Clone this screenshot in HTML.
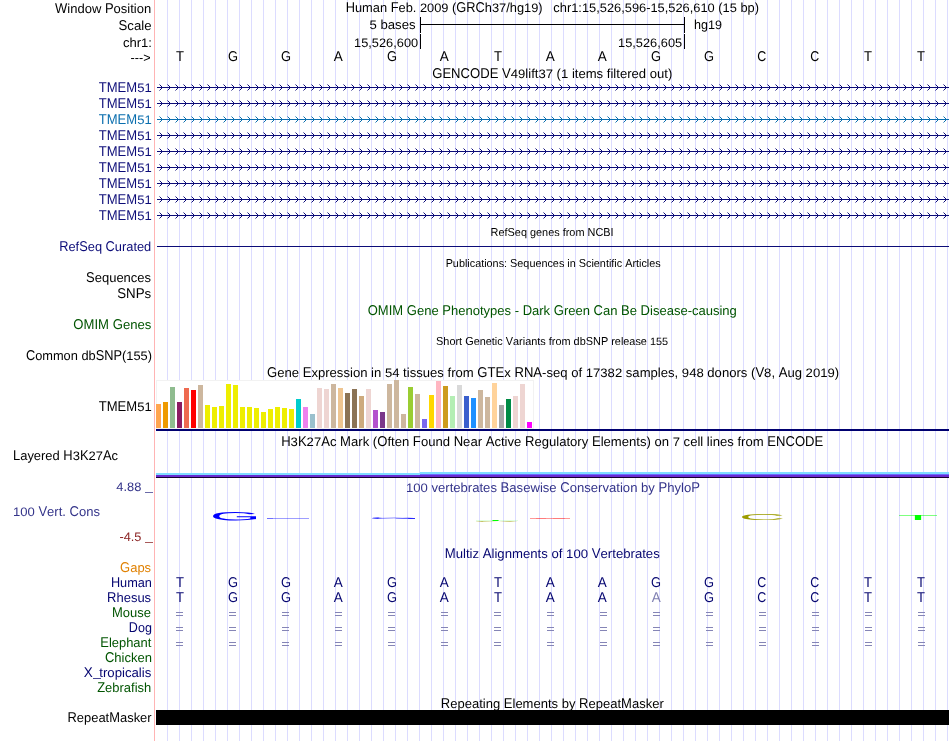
<!DOCTYPE html>
<html><head><meta charset="utf-8"><title>UCSC Genome Browser</title>
<style>
html,body{margin:0;padding:0;background:#fff;}
body{width:950px;height:741px;position:relative;overflow:hidden;font-family:"Liberation Sans",sans-serif;}
.t{position:absolute;white-space:pre;font-size:13px;line-height:16px;color:#000;text-rendering:geometricPrecision;}
.t u,.t b{display:inline-block;text-decoration:none;font-weight:normal;transform-origin:0 12px;}
.t u{transform:scaleY(1.09);}
.t b{transform:scaleY(0.95);}
.s{font-size:11px;line-height:14px;}
.s u,.s b{transform-origin:0 11px;}
.s u{transform:scaleY(1.055);}
.s b{transform:scaleY(0.95);}
#tx{position:absolute;left:0;top:0;width:950px;height:741px;will-change:transform;}
.b{position:absolute;display:block;}
</style></head><body>
<div id="tx">
<div class="b" style="left:167px;top:0px;width:1px;height:741px;background:#dcdcff"></div>
<div class="b" style="left:179px;top:0px;width:1px;height:741px;background:#dcdcff"></div>
<div class="b" style="left:191px;top:0px;width:1px;height:741px;background:#dcdcff"></div>
<div class="b" style="left:203px;top:0px;width:1px;height:741px;background:#dcdcff"></div>
<div class="b" style="left:215px;top:0px;width:1px;height:741px;background:#dcdcff"></div>
<div class="b" style="left:227px;top:0px;width:1px;height:741px;background:#dcdcff"></div>
<div class="b" style="left:239px;top:0px;width:1px;height:741px;background:#dcdcff"></div>
<div class="b" style="left:251px;top:0px;width:1px;height:741px;background:#dcdcff"></div>
<div class="b" style="left:263px;top:0px;width:1px;height:741px;background:#dcdcff"></div>
<div class="b" style="left:275px;top:0px;width:1px;height:741px;background:#dcdcff"></div>
<div class="b" style="left:287px;top:0px;width:1px;height:741px;background:#dcdcff"></div>
<div class="b" style="left:299px;top:0px;width:1px;height:741px;background:#dcdcff"></div>
<div class="b" style="left:311px;top:0px;width:1px;height:741px;background:#dcdcff"></div>
<div class="b" style="left:323px;top:0px;width:1px;height:741px;background:#dcdcff"></div>
<div class="b" style="left:335px;top:0px;width:1px;height:741px;background:#dcdcff"></div>
<div class="b" style="left:347px;top:0px;width:1px;height:741px;background:#dcdcff"></div>
<div class="b" style="left:359px;top:0px;width:1px;height:741px;background:#dcdcff"></div>
<div class="b" style="left:371px;top:0px;width:1px;height:741px;background:#dcdcff"></div>
<div class="b" style="left:383px;top:0px;width:1px;height:741px;background:#dcdcff"></div>
<div class="b" style="left:395px;top:0px;width:1px;height:741px;background:#dcdcff"></div>
<div class="b" style="left:407px;top:0px;width:1px;height:741px;background:#dcdcff"></div>
<div class="b" style="left:419px;top:0px;width:1px;height:741px;background:#dcdcff"></div>
<div class="b" style="left:431px;top:0px;width:1px;height:741px;background:#dcdcff"></div>
<div class="b" style="left:443px;top:0px;width:1px;height:741px;background:#dcdcff"></div>
<div class="b" style="left:455px;top:0px;width:1px;height:741px;background:#dcdcff"></div>
<div class="b" style="left:467px;top:0px;width:1px;height:741px;background:#dcdcff"></div>
<div class="b" style="left:479px;top:0px;width:1px;height:741px;background:#dcdcff"></div>
<div class="b" style="left:491px;top:0px;width:1px;height:741px;background:#dcdcff"></div>
<div class="b" style="left:503px;top:0px;width:1px;height:741px;background:#dcdcff"></div>
<div class="b" style="left:515px;top:0px;width:1px;height:741px;background:#dcdcff"></div>
<div class="b" style="left:527px;top:0px;width:1px;height:741px;background:#dcdcff"></div>
<div class="b" style="left:539px;top:0px;width:1px;height:741px;background:#dcdcff"></div>
<div class="b" style="left:551px;top:0px;width:1px;height:741px;background:#dcdcff"></div>
<div class="b" style="left:563px;top:0px;width:1px;height:741px;background:#dcdcff"></div>
<div class="b" style="left:575px;top:0px;width:1px;height:741px;background:#dcdcff"></div>
<div class="b" style="left:587px;top:0px;width:1px;height:741px;background:#dcdcff"></div>
<div class="b" style="left:599px;top:0px;width:1px;height:741px;background:#dcdcff"></div>
<div class="b" style="left:611px;top:0px;width:1px;height:741px;background:#dcdcff"></div>
<div class="b" style="left:623px;top:0px;width:1px;height:741px;background:#dcdcff"></div>
<div class="b" style="left:635px;top:0px;width:1px;height:741px;background:#dcdcff"></div>
<div class="b" style="left:647px;top:0px;width:1px;height:741px;background:#dcdcff"></div>
<div class="b" style="left:659px;top:0px;width:1px;height:741px;background:#dcdcff"></div>
<div class="b" style="left:671px;top:0px;width:1px;height:741px;background:#dcdcff"></div>
<div class="b" style="left:683px;top:0px;width:1px;height:741px;background:#dcdcff"></div>
<div class="b" style="left:695px;top:0px;width:1px;height:741px;background:#dcdcff"></div>
<div class="b" style="left:707px;top:0px;width:1px;height:741px;background:#dcdcff"></div>
<div class="b" style="left:719px;top:0px;width:1px;height:741px;background:#dcdcff"></div>
<div class="b" style="left:731px;top:0px;width:1px;height:741px;background:#dcdcff"></div>
<div class="b" style="left:743px;top:0px;width:1px;height:741px;background:#dcdcff"></div>
<div class="b" style="left:755px;top:0px;width:1px;height:741px;background:#dcdcff"></div>
<div class="b" style="left:767px;top:0px;width:1px;height:741px;background:#dcdcff"></div>
<div class="b" style="left:779px;top:0px;width:1px;height:741px;background:#dcdcff"></div>
<div class="b" style="left:791px;top:0px;width:1px;height:741px;background:#dcdcff"></div>
<div class="b" style="left:803px;top:0px;width:1px;height:741px;background:#dcdcff"></div>
<div class="b" style="left:815px;top:0px;width:1px;height:741px;background:#dcdcff"></div>
<div class="b" style="left:827px;top:0px;width:1px;height:741px;background:#dcdcff"></div>
<div class="b" style="left:839px;top:0px;width:1px;height:741px;background:#dcdcff"></div>
<div class="b" style="left:851px;top:0px;width:1px;height:741px;background:#dcdcff"></div>
<div class="b" style="left:863px;top:0px;width:1px;height:741px;background:#dcdcff"></div>
<div class="b" style="left:875px;top:0px;width:1px;height:741px;background:#dcdcff"></div>
<div class="b" style="left:887px;top:0px;width:1px;height:741px;background:#dcdcff"></div>
<div class="b" style="left:899px;top:0px;width:1px;height:741px;background:#dcdcff"></div>
<div class="b" style="left:911px;top:0px;width:1px;height:741px;background:#dcdcff"></div>
<div class="b" style="left:923px;top:0px;width:1px;height:741px;background:#dcdcff"></div>
<div class="b" style="left:935px;top:0px;width:1px;height:741px;background:#dcdcff"></div>
<div class="b" style="left:947px;top:0px;width:1px;height:741px;background:#dcdcff"></div>
<div class="b" style="left:154px;top:0px;width:1px;height:741px;background:#ffb4b4"></div>
<div class="t" style="left:55.4px;top:1px;width:96.10px;transform:scaleX(0.9990);transform-origin:100% 0"><u>W</u>indow <u>P</u>osition</div>
<div class="t" style="left:118.98px;top:18px;width:32.52px;transform:scaleX(1.0148);transform-origin:100% 0"><u>S</u>cale</div>
<div class="t" style="left:122.6px;top:35px;width:28.90px;transform:scaleX(1.0034);transform-origin:100% 0">chr<b>1</b>:</div>
<div class="t" style="left:130.42px;top:50px;width:20.58px;transform:scaleX(0.9719);transform-origin:100% 0">---&gt;</div>
<div class="t" style="left:343.48px;top:0px;width:418.44px;transform:scaleX(0.9870);transform-origin:50% 0"><u>H</u>uman <u>F</u>eb. <b>2009</b> (<u>GRC</u>h<b>37</b>/hg<b>19</b>)   chr<b>1</b>:<b>15</b>,<b>526</b>,<b>596</b>-<b>15</b>,<b>526</b>,<b>610</b> (<b>15</b> bp)</div>
<div class="t" style="left:370.47px;top:17px;width:45.53px;transform:scaleX(1.0103);transform-origin:100% 0"><b>5</b> bases</div>
<div class="b" style="left:420px;top:17px;width:1px;height:16px;background:#000"></div>
<div class="b" style="left:684px;top:17px;width:1px;height:16px;background:#000"></div>
<div class="b" style="left:420px;top:24px;width:265px;height:1px;background:#000"></div>
<div class="t" style="left:694px;top:17px;width:28.92px;transform:scaleX(0.9682);transform-origin:0 0">hg<b>19</b></div>
<div class="t" style="left:352.94px;top:35px;width:65.06px;transform:scaleX(0.9837);transform-origin:100% 0"><b>15</b>,<b>526</b>,<b>600</b></div>
<div class="b" style="left:420px;top:34px;width:1px;height:15px;background:#000"></div>
<div class="t" style="left:616.94px;top:35px;width:65.06px;transform:scaleX(0.9837);transform-origin:100% 0"><b>15</b>,<b>526</b>,<b>605</b></div>
<div class="b" style="left:684px;top:34px;width:1px;height:15px;background:#000"></div>
<div class="t" style="left:176.03px;top:49px;width:7.94px;transform:scaleX(1.0074);transform-origin:50% 0"><u>T</u></div>
<div class="t" style="left:227.87px;top:49px;width:10.11px;transform:scaleX(0.9889);transform-origin:50% 0"><u>G</u></div>
<div class="t" style="left:280.8px;top:49px;width:10.11px;transform:scaleX(0.9889);transform-origin:50% 0"><u>G</u></div>
<div class="t" style="left:334.45px;top:49px;width:8.67px;transform:scaleX(1.0380);transform-origin:50% 0"><u>A</u></div>
<div class="t" style="left:386.66px;top:49px;width:10.11px;transform:scaleX(0.9889);transform-origin:50% 0"><u>G</u></div>
<div class="t" style="left:440.31px;top:49px;width:8.67px;transform:scaleX(1.0380);transform-origin:50% 0"><u>A</u></div>
<div class="t" style="left:493.61px;top:49px;width:7.94px;transform:scaleX(1.0074);transform-origin:50% 0"><u>T</u></div>
<div class="t" style="left:546.17px;top:49px;width:8.67px;transform:scaleX(1.0380);transform-origin:50% 0"><u>A</u></div>
<div class="t" style="left:598.3px;top:49px;width:8.67px;transform:scaleX(1.0380);transform-origin:50% 0"><u>A</u></div>
<div class="t" style="left:651.31px;top:49px;width:10.11px;transform:scaleX(0.9889);transform-origin:50% 0"><u>G</u></div>
<div class="t" style="left:704.24px;top:49px;width:10.11px;transform:scaleX(0.9889);transform-origin:50% 0"><u>G</u></div>
<div class="t" style="left:756.54px;top:49px;width:9.39px;transform:scaleX(0.9587);transform-origin:50% 0"><u>C</u></div>
<div class="t" style="left:810.17px;top:49px;width:9.39px;transform:scaleX(0.9587);transform-origin:50% 0"><u>C</u></div>
<div class="t" style="left:864.12px;top:49px;width:7.94px;transform:scaleX(1.0074);transform-origin:50% 0"><u>T</u></div>
<div class="t" style="left:917.05px;top:49px;width:7.94px;transform:scaleX(1.0074);transform-origin:50% 0"><u>T</u></div>
<div class="t" style="left:432.79px;top:66px;width:238.42px;transform:scaleX(1.0066);transform-origin:50% 0"><u>GENCODE</u> <u>V</u><b>49</b>lift<b>37</b> (<b>1</b> items filtered out)</div>
<div class="t" style="left:98.77px;top:80px;width:52.73px;color:#0c0c78;transform:scaleX(1.0051);transform-origin:100% 0"><u>TMEM</u><b>51</b></div>
<svg class="b" style="left:157px;top:84px" width="792" height="7" viewBox="0 0 792 7"><path d="M0 3.5H792" stroke="#0c0c78" stroke-width="1" fill="none"/><path d="M2.5 0.5L5.5 3.5L2.5 6.5M10.5 0.5L13.5 3.5L10.5 6.5M18.5 0.5L21.5 3.5L18.5 6.5M26.5 0.5L29.5 3.5L26.5 6.5M34.5 0.5L37.5 3.5L34.5 6.5M42.5 0.5L45.5 3.5L42.5 6.5M50.5 0.5L53.5 3.5L50.5 6.5M58.5 0.5L61.5 3.5L58.5 6.5M66.5 0.5L69.5 3.5L66.5 6.5M74.5 0.5L77.5 3.5L74.5 6.5M82.5 0.5L85.5 3.5L82.5 6.5M90.5 0.5L93.5 3.5L90.5 6.5M98.5 0.5L101.5 3.5L98.5 6.5M106.5 0.5L109.5 3.5L106.5 6.5M114.5 0.5L117.5 3.5L114.5 6.5M122.5 0.5L125.5 3.5L122.5 6.5M130.5 0.5L133.5 3.5L130.5 6.5M138.5 0.5L141.5 3.5L138.5 6.5M146.5 0.5L149.5 3.5L146.5 6.5M154.5 0.5L157.5 3.5L154.5 6.5M162.5 0.5L165.5 3.5L162.5 6.5M170.5 0.5L173.5 3.5L170.5 6.5M178.5 0.5L181.5 3.5L178.5 6.5M186.5 0.5L189.5 3.5L186.5 6.5M194.5 0.5L197.5 3.5L194.5 6.5M202.5 0.5L205.5 3.5L202.5 6.5M210.5 0.5L213.5 3.5L210.5 6.5M218.5 0.5L221.5 3.5L218.5 6.5M226.5 0.5L229.5 3.5L226.5 6.5M234.5 0.5L237.5 3.5L234.5 6.5M242.5 0.5L245.5 3.5L242.5 6.5M250.5 0.5L253.5 3.5L250.5 6.5M258.5 0.5L261.5 3.5L258.5 6.5M266.5 0.5L269.5 3.5L266.5 6.5M274.5 0.5L277.5 3.5L274.5 6.5M282.5 0.5L285.5 3.5L282.5 6.5M290.5 0.5L293.5 3.5L290.5 6.5M298.5 0.5L301.5 3.5L298.5 6.5M306.5 0.5L309.5 3.5L306.5 6.5M314.5 0.5L317.5 3.5L314.5 6.5M322.5 0.5L325.5 3.5L322.5 6.5M330.5 0.5L333.5 3.5L330.5 6.5M338.5 0.5L341.5 3.5L338.5 6.5M346.5 0.5L349.5 3.5L346.5 6.5M354.5 0.5L357.5 3.5L354.5 6.5M362.5 0.5L365.5 3.5L362.5 6.5M370.5 0.5L373.5 3.5L370.5 6.5M378.5 0.5L381.5 3.5L378.5 6.5M386.5 0.5L389.5 3.5L386.5 6.5M394.5 0.5L397.5 3.5L394.5 6.5M402.5 0.5L405.5 3.5L402.5 6.5M410.5 0.5L413.5 3.5L410.5 6.5M418.5 0.5L421.5 3.5L418.5 6.5M426.5 0.5L429.5 3.5L426.5 6.5M434.5 0.5L437.5 3.5L434.5 6.5M442.5 0.5L445.5 3.5L442.5 6.5M450.5 0.5L453.5 3.5L450.5 6.5M458.5 0.5L461.5 3.5L458.5 6.5M466.5 0.5L469.5 3.5L466.5 6.5M474.5 0.5L477.5 3.5L474.5 6.5M482.5 0.5L485.5 3.5L482.5 6.5M490.5 0.5L493.5 3.5L490.5 6.5M498.5 0.5L501.5 3.5L498.5 6.5M506.5 0.5L509.5 3.5L506.5 6.5M514.5 0.5L517.5 3.5L514.5 6.5M522.5 0.5L525.5 3.5L522.5 6.5M530.5 0.5L533.5 3.5L530.5 6.5M538.5 0.5L541.5 3.5L538.5 6.5M546.5 0.5L549.5 3.5L546.5 6.5M554.5 0.5L557.5 3.5L554.5 6.5M562.5 0.5L565.5 3.5L562.5 6.5M570.5 0.5L573.5 3.5L570.5 6.5M578.5 0.5L581.5 3.5L578.5 6.5M586.5 0.5L589.5 3.5L586.5 6.5M594.5 0.5L597.5 3.5L594.5 6.5M602.5 0.5L605.5 3.5L602.5 6.5M610.5 0.5L613.5 3.5L610.5 6.5M618.5 0.5L621.5 3.5L618.5 6.5M626.5 0.5L629.5 3.5L626.5 6.5M634.5 0.5L637.5 3.5L634.5 6.5M642.5 0.5L645.5 3.5L642.5 6.5M650.5 0.5L653.5 3.5L650.5 6.5M658.5 0.5L661.5 3.5L658.5 6.5M666.5 0.5L669.5 3.5L666.5 6.5M674.5 0.5L677.5 3.5L674.5 6.5M682.5 0.5L685.5 3.5L682.5 6.5M690.5 0.5L693.5 3.5L690.5 6.5M698.5 0.5L701.5 3.5L698.5 6.5M706.5 0.5L709.5 3.5L706.5 6.5M714.5 0.5L717.5 3.5L714.5 6.5M722.5 0.5L725.5 3.5L722.5 6.5M730.5 0.5L733.5 3.5L730.5 6.5M738.5 0.5L741.5 3.5L738.5 6.5M746.5 0.5L749.5 3.5L746.5 6.5M754.5 0.5L757.5 3.5L754.5 6.5M762.5 0.5L765.5 3.5L762.5 6.5M770.5 0.5L773.5 3.5L770.5 6.5M778.5 0.5L781.5 3.5L778.5 6.5M786.5 0.5L789.5 3.5L786.5 6.5" stroke="#0c0c78" stroke-width="1" fill="none"/></svg>
<div class="t" style="left:98.77px;top:96px;width:52.73px;color:#0c0c78;transform:scaleX(1.0051);transform-origin:100% 0"><u>TMEM</u><b>51</b></div>
<svg class="b" style="left:157px;top:100px" width="792" height="7" viewBox="0 0 792 7"><path d="M0 3.5H792" stroke="#0c0c78" stroke-width="1" fill="none"/><path d="M2.5 0.5L5.5 3.5L2.5 6.5M10.5 0.5L13.5 3.5L10.5 6.5M18.5 0.5L21.5 3.5L18.5 6.5M26.5 0.5L29.5 3.5L26.5 6.5M34.5 0.5L37.5 3.5L34.5 6.5M42.5 0.5L45.5 3.5L42.5 6.5M50.5 0.5L53.5 3.5L50.5 6.5M58.5 0.5L61.5 3.5L58.5 6.5M66.5 0.5L69.5 3.5L66.5 6.5M74.5 0.5L77.5 3.5L74.5 6.5M82.5 0.5L85.5 3.5L82.5 6.5M90.5 0.5L93.5 3.5L90.5 6.5M98.5 0.5L101.5 3.5L98.5 6.5M106.5 0.5L109.5 3.5L106.5 6.5M114.5 0.5L117.5 3.5L114.5 6.5M122.5 0.5L125.5 3.5L122.5 6.5M130.5 0.5L133.5 3.5L130.5 6.5M138.5 0.5L141.5 3.5L138.5 6.5M146.5 0.5L149.5 3.5L146.5 6.5M154.5 0.5L157.5 3.5L154.5 6.5M162.5 0.5L165.5 3.5L162.5 6.5M170.5 0.5L173.5 3.5L170.5 6.5M178.5 0.5L181.5 3.5L178.5 6.5M186.5 0.5L189.5 3.5L186.5 6.5M194.5 0.5L197.5 3.5L194.5 6.5M202.5 0.5L205.5 3.5L202.5 6.5M210.5 0.5L213.5 3.5L210.5 6.5M218.5 0.5L221.5 3.5L218.5 6.5M226.5 0.5L229.5 3.5L226.5 6.5M234.5 0.5L237.5 3.5L234.5 6.5M242.5 0.5L245.5 3.5L242.5 6.5M250.5 0.5L253.5 3.5L250.5 6.5M258.5 0.5L261.5 3.5L258.5 6.5M266.5 0.5L269.5 3.5L266.5 6.5M274.5 0.5L277.5 3.5L274.5 6.5M282.5 0.5L285.5 3.5L282.5 6.5M290.5 0.5L293.5 3.5L290.5 6.5M298.5 0.5L301.5 3.5L298.5 6.5M306.5 0.5L309.5 3.5L306.5 6.5M314.5 0.5L317.5 3.5L314.5 6.5M322.5 0.5L325.5 3.5L322.5 6.5M330.5 0.5L333.5 3.5L330.5 6.5M338.5 0.5L341.5 3.5L338.5 6.5M346.5 0.5L349.5 3.5L346.5 6.5M354.5 0.5L357.5 3.5L354.5 6.5M362.5 0.5L365.5 3.5L362.5 6.5M370.5 0.5L373.5 3.5L370.5 6.5M378.5 0.5L381.5 3.5L378.5 6.5M386.5 0.5L389.5 3.5L386.5 6.5M394.5 0.5L397.5 3.5L394.5 6.5M402.5 0.5L405.5 3.5L402.5 6.5M410.5 0.5L413.5 3.5L410.5 6.5M418.5 0.5L421.5 3.5L418.5 6.5M426.5 0.5L429.5 3.5L426.5 6.5M434.5 0.5L437.5 3.5L434.5 6.5M442.5 0.5L445.5 3.5L442.5 6.5M450.5 0.5L453.5 3.5L450.5 6.5M458.5 0.5L461.5 3.5L458.5 6.5M466.5 0.5L469.5 3.5L466.5 6.5M474.5 0.5L477.5 3.5L474.5 6.5M482.5 0.5L485.5 3.5L482.5 6.5M490.5 0.5L493.5 3.5L490.5 6.5M498.5 0.5L501.5 3.5L498.5 6.5M506.5 0.5L509.5 3.5L506.5 6.5M514.5 0.5L517.5 3.5L514.5 6.5M522.5 0.5L525.5 3.5L522.5 6.5M530.5 0.5L533.5 3.5L530.5 6.5M538.5 0.5L541.5 3.5L538.5 6.5M546.5 0.5L549.5 3.5L546.5 6.5M554.5 0.5L557.5 3.5L554.5 6.5M562.5 0.5L565.5 3.5L562.5 6.5M570.5 0.5L573.5 3.5L570.5 6.5M578.5 0.5L581.5 3.5L578.5 6.5M586.5 0.5L589.5 3.5L586.5 6.5M594.5 0.5L597.5 3.5L594.5 6.5M602.5 0.5L605.5 3.5L602.5 6.5M610.5 0.5L613.5 3.5L610.5 6.5M618.5 0.5L621.5 3.5L618.5 6.5M626.5 0.5L629.5 3.5L626.5 6.5M634.5 0.5L637.5 3.5L634.5 6.5M642.5 0.5L645.5 3.5L642.5 6.5M650.5 0.5L653.5 3.5L650.5 6.5M658.5 0.5L661.5 3.5L658.5 6.5M666.5 0.5L669.5 3.5L666.5 6.5M674.5 0.5L677.5 3.5L674.5 6.5M682.5 0.5L685.5 3.5L682.5 6.5M690.5 0.5L693.5 3.5L690.5 6.5M698.5 0.5L701.5 3.5L698.5 6.5M706.5 0.5L709.5 3.5L706.5 6.5M714.5 0.5L717.5 3.5L714.5 6.5M722.5 0.5L725.5 3.5L722.5 6.5M730.5 0.5L733.5 3.5L730.5 6.5M738.5 0.5L741.5 3.5L738.5 6.5M746.5 0.5L749.5 3.5L746.5 6.5M754.5 0.5L757.5 3.5L754.5 6.5M762.5 0.5L765.5 3.5L762.5 6.5M770.5 0.5L773.5 3.5L770.5 6.5M778.5 0.5L781.5 3.5L778.5 6.5M786.5 0.5L789.5 3.5L786.5 6.5" stroke="#0c0c78" stroke-width="1" fill="none"/></svg>
<div class="t" style="left:98.77px;top:112px;width:52.73px;color:#0a6eae;transform:scaleX(1.0051);transform-origin:100% 0"><u>TMEM</u><b>51</b></div>
<svg class="b" style="left:157px;top:116px" width="792" height="7" viewBox="0 0 792 7"><path d="M0 3.5H792" stroke="#0a6eae" stroke-width="1" fill="none"/><path d="M2.5 0.5L5.5 3.5L2.5 6.5M10.5 0.5L13.5 3.5L10.5 6.5M18.5 0.5L21.5 3.5L18.5 6.5M26.5 0.5L29.5 3.5L26.5 6.5M34.5 0.5L37.5 3.5L34.5 6.5M42.5 0.5L45.5 3.5L42.5 6.5M50.5 0.5L53.5 3.5L50.5 6.5M58.5 0.5L61.5 3.5L58.5 6.5M66.5 0.5L69.5 3.5L66.5 6.5M74.5 0.5L77.5 3.5L74.5 6.5M82.5 0.5L85.5 3.5L82.5 6.5M90.5 0.5L93.5 3.5L90.5 6.5M98.5 0.5L101.5 3.5L98.5 6.5M106.5 0.5L109.5 3.5L106.5 6.5M114.5 0.5L117.5 3.5L114.5 6.5M122.5 0.5L125.5 3.5L122.5 6.5M130.5 0.5L133.5 3.5L130.5 6.5M138.5 0.5L141.5 3.5L138.5 6.5M146.5 0.5L149.5 3.5L146.5 6.5M154.5 0.5L157.5 3.5L154.5 6.5M162.5 0.5L165.5 3.5L162.5 6.5M170.5 0.5L173.5 3.5L170.5 6.5M178.5 0.5L181.5 3.5L178.5 6.5M186.5 0.5L189.5 3.5L186.5 6.5M194.5 0.5L197.5 3.5L194.5 6.5M202.5 0.5L205.5 3.5L202.5 6.5M210.5 0.5L213.5 3.5L210.5 6.5M218.5 0.5L221.5 3.5L218.5 6.5M226.5 0.5L229.5 3.5L226.5 6.5M234.5 0.5L237.5 3.5L234.5 6.5M242.5 0.5L245.5 3.5L242.5 6.5M250.5 0.5L253.5 3.5L250.5 6.5M258.5 0.5L261.5 3.5L258.5 6.5M266.5 0.5L269.5 3.5L266.5 6.5M274.5 0.5L277.5 3.5L274.5 6.5M282.5 0.5L285.5 3.5L282.5 6.5M290.5 0.5L293.5 3.5L290.5 6.5M298.5 0.5L301.5 3.5L298.5 6.5M306.5 0.5L309.5 3.5L306.5 6.5M314.5 0.5L317.5 3.5L314.5 6.5M322.5 0.5L325.5 3.5L322.5 6.5M330.5 0.5L333.5 3.5L330.5 6.5M338.5 0.5L341.5 3.5L338.5 6.5M346.5 0.5L349.5 3.5L346.5 6.5M354.5 0.5L357.5 3.5L354.5 6.5M362.5 0.5L365.5 3.5L362.5 6.5M370.5 0.5L373.5 3.5L370.5 6.5M378.5 0.5L381.5 3.5L378.5 6.5M386.5 0.5L389.5 3.5L386.5 6.5M394.5 0.5L397.5 3.5L394.5 6.5M402.5 0.5L405.5 3.5L402.5 6.5M410.5 0.5L413.5 3.5L410.5 6.5M418.5 0.5L421.5 3.5L418.5 6.5M426.5 0.5L429.5 3.5L426.5 6.5M434.5 0.5L437.5 3.5L434.5 6.5M442.5 0.5L445.5 3.5L442.5 6.5M450.5 0.5L453.5 3.5L450.5 6.5M458.5 0.5L461.5 3.5L458.5 6.5M466.5 0.5L469.5 3.5L466.5 6.5M474.5 0.5L477.5 3.5L474.5 6.5M482.5 0.5L485.5 3.5L482.5 6.5M490.5 0.5L493.5 3.5L490.5 6.5M498.5 0.5L501.5 3.5L498.5 6.5M506.5 0.5L509.5 3.5L506.5 6.5M514.5 0.5L517.5 3.5L514.5 6.5M522.5 0.5L525.5 3.5L522.5 6.5M530.5 0.5L533.5 3.5L530.5 6.5M538.5 0.5L541.5 3.5L538.5 6.5M546.5 0.5L549.5 3.5L546.5 6.5M554.5 0.5L557.5 3.5L554.5 6.5M562.5 0.5L565.5 3.5L562.5 6.5M570.5 0.5L573.5 3.5L570.5 6.5M578.5 0.5L581.5 3.5L578.5 6.5M586.5 0.5L589.5 3.5L586.5 6.5M594.5 0.5L597.5 3.5L594.5 6.5M602.5 0.5L605.5 3.5L602.5 6.5M610.5 0.5L613.5 3.5L610.5 6.5M618.5 0.5L621.5 3.5L618.5 6.5M626.5 0.5L629.5 3.5L626.5 6.5M634.5 0.5L637.5 3.5L634.5 6.5M642.5 0.5L645.5 3.5L642.5 6.5M650.5 0.5L653.5 3.5L650.5 6.5M658.5 0.5L661.5 3.5L658.5 6.5M666.5 0.5L669.5 3.5L666.5 6.5M674.5 0.5L677.5 3.5L674.5 6.5M682.5 0.5L685.5 3.5L682.5 6.5M690.5 0.5L693.5 3.5L690.5 6.5M698.5 0.5L701.5 3.5L698.5 6.5M706.5 0.5L709.5 3.5L706.5 6.5M714.5 0.5L717.5 3.5L714.5 6.5M722.5 0.5L725.5 3.5L722.5 6.5M730.5 0.5L733.5 3.5L730.5 6.5M738.5 0.5L741.5 3.5L738.5 6.5M746.5 0.5L749.5 3.5L746.5 6.5M754.5 0.5L757.5 3.5L754.5 6.5M762.5 0.5L765.5 3.5L762.5 6.5M770.5 0.5L773.5 3.5L770.5 6.5M778.5 0.5L781.5 3.5L778.5 6.5M786.5 0.5L789.5 3.5L786.5 6.5" stroke="#0a6eae" stroke-width="1" fill="none"/></svg>
<div class="t" style="left:98.77px;top:128px;width:52.73px;color:#0c0c78;transform:scaleX(1.0051);transform-origin:100% 0"><u>TMEM</u><b>51</b></div>
<svg class="b" style="left:157px;top:132px" width="792" height="7" viewBox="0 0 792 7"><path d="M0 3.5H792" stroke="#0c0c78" stroke-width="1" fill="none"/><path d="M2.5 0.5L5.5 3.5L2.5 6.5M10.5 0.5L13.5 3.5L10.5 6.5M18.5 0.5L21.5 3.5L18.5 6.5M26.5 0.5L29.5 3.5L26.5 6.5M34.5 0.5L37.5 3.5L34.5 6.5M42.5 0.5L45.5 3.5L42.5 6.5M50.5 0.5L53.5 3.5L50.5 6.5M58.5 0.5L61.5 3.5L58.5 6.5M66.5 0.5L69.5 3.5L66.5 6.5M74.5 0.5L77.5 3.5L74.5 6.5M82.5 0.5L85.5 3.5L82.5 6.5M90.5 0.5L93.5 3.5L90.5 6.5M98.5 0.5L101.5 3.5L98.5 6.5M106.5 0.5L109.5 3.5L106.5 6.5M114.5 0.5L117.5 3.5L114.5 6.5M122.5 0.5L125.5 3.5L122.5 6.5M130.5 0.5L133.5 3.5L130.5 6.5M138.5 0.5L141.5 3.5L138.5 6.5M146.5 0.5L149.5 3.5L146.5 6.5M154.5 0.5L157.5 3.5L154.5 6.5M162.5 0.5L165.5 3.5L162.5 6.5M170.5 0.5L173.5 3.5L170.5 6.5M178.5 0.5L181.5 3.5L178.5 6.5M186.5 0.5L189.5 3.5L186.5 6.5M194.5 0.5L197.5 3.5L194.5 6.5M202.5 0.5L205.5 3.5L202.5 6.5M210.5 0.5L213.5 3.5L210.5 6.5M218.5 0.5L221.5 3.5L218.5 6.5M226.5 0.5L229.5 3.5L226.5 6.5M234.5 0.5L237.5 3.5L234.5 6.5M242.5 0.5L245.5 3.5L242.5 6.5M250.5 0.5L253.5 3.5L250.5 6.5M258.5 0.5L261.5 3.5L258.5 6.5M266.5 0.5L269.5 3.5L266.5 6.5M274.5 0.5L277.5 3.5L274.5 6.5M282.5 0.5L285.5 3.5L282.5 6.5M290.5 0.5L293.5 3.5L290.5 6.5M298.5 0.5L301.5 3.5L298.5 6.5M306.5 0.5L309.5 3.5L306.5 6.5M314.5 0.5L317.5 3.5L314.5 6.5M322.5 0.5L325.5 3.5L322.5 6.5M330.5 0.5L333.5 3.5L330.5 6.5M338.5 0.5L341.5 3.5L338.5 6.5M346.5 0.5L349.5 3.5L346.5 6.5M354.5 0.5L357.5 3.5L354.5 6.5M362.5 0.5L365.5 3.5L362.5 6.5M370.5 0.5L373.5 3.5L370.5 6.5M378.5 0.5L381.5 3.5L378.5 6.5M386.5 0.5L389.5 3.5L386.5 6.5M394.5 0.5L397.5 3.5L394.5 6.5M402.5 0.5L405.5 3.5L402.5 6.5M410.5 0.5L413.5 3.5L410.5 6.5M418.5 0.5L421.5 3.5L418.5 6.5M426.5 0.5L429.5 3.5L426.5 6.5M434.5 0.5L437.5 3.5L434.5 6.5M442.5 0.5L445.5 3.5L442.5 6.5M450.5 0.5L453.5 3.5L450.5 6.5M458.5 0.5L461.5 3.5L458.5 6.5M466.5 0.5L469.5 3.5L466.5 6.5M474.5 0.5L477.5 3.5L474.5 6.5M482.5 0.5L485.5 3.5L482.5 6.5M490.5 0.5L493.5 3.5L490.5 6.5M498.5 0.5L501.5 3.5L498.5 6.5M506.5 0.5L509.5 3.5L506.5 6.5M514.5 0.5L517.5 3.5L514.5 6.5M522.5 0.5L525.5 3.5L522.5 6.5M530.5 0.5L533.5 3.5L530.5 6.5M538.5 0.5L541.5 3.5L538.5 6.5M546.5 0.5L549.5 3.5L546.5 6.5M554.5 0.5L557.5 3.5L554.5 6.5M562.5 0.5L565.5 3.5L562.5 6.5M570.5 0.5L573.5 3.5L570.5 6.5M578.5 0.5L581.5 3.5L578.5 6.5M586.5 0.5L589.5 3.5L586.5 6.5M594.5 0.5L597.5 3.5L594.5 6.5M602.5 0.5L605.5 3.5L602.5 6.5M610.5 0.5L613.5 3.5L610.5 6.5M618.5 0.5L621.5 3.5L618.5 6.5M626.5 0.5L629.5 3.5L626.5 6.5M634.5 0.5L637.5 3.5L634.5 6.5M642.5 0.5L645.5 3.5L642.5 6.5M650.5 0.5L653.5 3.5L650.5 6.5M658.5 0.5L661.5 3.5L658.5 6.5M666.5 0.5L669.5 3.5L666.5 6.5M674.5 0.5L677.5 3.5L674.5 6.5M682.5 0.5L685.5 3.5L682.5 6.5M690.5 0.5L693.5 3.5L690.5 6.5M698.5 0.5L701.5 3.5L698.5 6.5M706.5 0.5L709.5 3.5L706.5 6.5M714.5 0.5L717.5 3.5L714.5 6.5M722.5 0.5L725.5 3.5L722.5 6.5M730.5 0.5L733.5 3.5L730.5 6.5M738.5 0.5L741.5 3.5L738.5 6.5M746.5 0.5L749.5 3.5L746.5 6.5M754.5 0.5L757.5 3.5L754.5 6.5M762.5 0.5L765.5 3.5L762.5 6.5M770.5 0.5L773.5 3.5L770.5 6.5M778.5 0.5L781.5 3.5L778.5 6.5M786.5 0.5L789.5 3.5L786.5 6.5" stroke="#0c0c78" stroke-width="1" fill="none"/></svg>
<div class="t" style="left:98.77px;top:144px;width:52.73px;color:#0c0c78;transform:scaleX(1.0051);transform-origin:100% 0"><u>TMEM</u><b>51</b></div>
<svg class="b" style="left:157px;top:148px" width="792" height="7" viewBox="0 0 792 7"><path d="M0 3.5H792" stroke="#0c0c78" stroke-width="1" fill="none"/><path d="M2.5 0.5L5.5 3.5L2.5 6.5M10.5 0.5L13.5 3.5L10.5 6.5M18.5 0.5L21.5 3.5L18.5 6.5M26.5 0.5L29.5 3.5L26.5 6.5M34.5 0.5L37.5 3.5L34.5 6.5M42.5 0.5L45.5 3.5L42.5 6.5M50.5 0.5L53.5 3.5L50.5 6.5M58.5 0.5L61.5 3.5L58.5 6.5M66.5 0.5L69.5 3.5L66.5 6.5M74.5 0.5L77.5 3.5L74.5 6.5M82.5 0.5L85.5 3.5L82.5 6.5M90.5 0.5L93.5 3.5L90.5 6.5M98.5 0.5L101.5 3.5L98.5 6.5M106.5 0.5L109.5 3.5L106.5 6.5M114.5 0.5L117.5 3.5L114.5 6.5M122.5 0.5L125.5 3.5L122.5 6.5M130.5 0.5L133.5 3.5L130.5 6.5M138.5 0.5L141.5 3.5L138.5 6.5M146.5 0.5L149.5 3.5L146.5 6.5M154.5 0.5L157.5 3.5L154.5 6.5M162.5 0.5L165.5 3.5L162.5 6.5M170.5 0.5L173.5 3.5L170.5 6.5M178.5 0.5L181.5 3.5L178.5 6.5M186.5 0.5L189.5 3.5L186.5 6.5M194.5 0.5L197.5 3.5L194.5 6.5M202.5 0.5L205.5 3.5L202.5 6.5M210.5 0.5L213.5 3.5L210.5 6.5M218.5 0.5L221.5 3.5L218.5 6.5M226.5 0.5L229.5 3.5L226.5 6.5M234.5 0.5L237.5 3.5L234.5 6.5M242.5 0.5L245.5 3.5L242.5 6.5M250.5 0.5L253.5 3.5L250.5 6.5M258.5 0.5L261.5 3.5L258.5 6.5M266.5 0.5L269.5 3.5L266.5 6.5M274.5 0.5L277.5 3.5L274.5 6.5M282.5 0.5L285.5 3.5L282.5 6.5M290.5 0.5L293.5 3.5L290.5 6.5M298.5 0.5L301.5 3.5L298.5 6.5M306.5 0.5L309.5 3.5L306.5 6.5M314.5 0.5L317.5 3.5L314.5 6.5M322.5 0.5L325.5 3.5L322.5 6.5M330.5 0.5L333.5 3.5L330.5 6.5M338.5 0.5L341.5 3.5L338.5 6.5M346.5 0.5L349.5 3.5L346.5 6.5M354.5 0.5L357.5 3.5L354.5 6.5M362.5 0.5L365.5 3.5L362.5 6.5M370.5 0.5L373.5 3.5L370.5 6.5M378.5 0.5L381.5 3.5L378.5 6.5M386.5 0.5L389.5 3.5L386.5 6.5M394.5 0.5L397.5 3.5L394.5 6.5M402.5 0.5L405.5 3.5L402.5 6.5M410.5 0.5L413.5 3.5L410.5 6.5M418.5 0.5L421.5 3.5L418.5 6.5M426.5 0.5L429.5 3.5L426.5 6.5M434.5 0.5L437.5 3.5L434.5 6.5M442.5 0.5L445.5 3.5L442.5 6.5M450.5 0.5L453.5 3.5L450.5 6.5M458.5 0.5L461.5 3.5L458.5 6.5M466.5 0.5L469.5 3.5L466.5 6.5M474.5 0.5L477.5 3.5L474.5 6.5M482.5 0.5L485.5 3.5L482.5 6.5M490.5 0.5L493.5 3.5L490.5 6.5M498.5 0.5L501.5 3.5L498.5 6.5M506.5 0.5L509.5 3.5L506.5 6.5M514.5 0.5L517.5 3.5L514.5 6.5M522.5 0.5L525.5 3.5L522.5 6.5M530.5 0.5L533.5 3.5L530.5 6.5M538.5 0.5L541.5 3.5L538.5 6.5M546.5 0.5L549.5 3.5L546.5 6.5M554.5 0.5L557.5 3.5L554.5 6.5M562.5 0.5L565.5 3.5L562.5 6.5M570.5 0.5L573.5 3.5L570.5 6.5M578.5 0.5L581.5 3.5L578.5 6.5M586.5 0.5L589.5 3.5L586.5 6.5M594.5 0.5L597.5 3.5L594.5 6.5M602.5 0.5L605.5 3.5L602.5 6.5M610.5 0.5L613.5 3.5L610.5 6.5M618.5 0.5L621.5 3.5L618.5 6.5M626.5 0.5L629.5 3.5L626.5 6.5M634.5 0.5L637.5 3.5L634.5 6.5M642.5 0.5L645.5 3.5L642.5 6.5M650.5 0.5L653.5 3.5L650.5 6.5M658.5 0.5L661.5 3.5L658.5 6.5M666.5 0.5L669.5 3.5L666.5 6.5M674.5 0.5L677.5 3.5L674.5 6.5M682.5 0.5L685.5 3.5L682.5 6.5M690.5 0.5L693.5 3.5L690.5 6.5M698.5 0.5L701.5 3.5L698.5 6.5M706.5 0.5L709.5 3.5L706.5 6.5M714.5 0.5L717.5 3.5L714.5 6.5M722.5 0.5L725.5 3.5L722.5 6.5M730.5 0.5L733.5 3.5L730.5 6.5M738.5 0.5L741.5 3.5L738.5 6.5M746.5 0.5L749.5 3.5L746.5 6.5M754.5 0.5L757.5 3.5L754.5 6.5M762.5 0.5L765.5 3.5L762.5 6.5M770.5 0.5L773.5 3.5L770.5 6.5M778.5 0.5L781.5 3.5L778.5 6.5M786.5 0.5L789.5 3.5L786.5 6.5" stroke="#0c0c78" stroke-width="1" fill="none"/></svg>
<div class="t" style="left:98.77px;top:160px;width:52.73px;color:#0c0c78;transform:scaleX(1.0051);transform-origin:100% 0"><u>TMEM</u><b>51</b></div>
<svg class="b" style="left:157px;top:164px" width="792" height="7" viewBox="0 0 792 7"><path d="M0 3.5H792" stroke="#0c0c78" stroke-width="1" fill="none"/><path d="M2.5 0.5L5.5 3.5L2.5 6.5M10.5 0.5L13.5 3.5L10.5 6.5M18.5 0.5L21.5 3.5L18.5 6.5M26.5 0.5L29.5 3.5L26.5 6.5M34.5 0.5L37.5 3.5L34.5 6.5M42.5 0.5L45.5 3.5L42.5 6.5M50.5 0.5L53.5 3.5L50.5 6.5M58.5 0.5L61.5 3.5L58.5 6.5M66.5 0.5L69.5 3.5L66.5 6.5M74.5 0.5L77.5 3.5L74.5 6.5M82.5 0.5L85.5 3.5L82.5 6.5M90.5 0.5L93.5 3.5L90.5 6.5M98.5 0.5L101.5 3.5L98.5 6.5M106.5 0.5L109.5 3.5L106.5 6.5M114.5 0.5L117.5 3.5L114.5 6.5M122.5 0.5L125.5 3.5L122.5 6.5M130.5 0.5L133.5 3.5L130.5 6.5M138.5 0.5L141.5 3.5L138.5 6.5M146.5 0.5L149.5 3.5L146.5 6.5M154.5 0.5L157.5 3.5L154.5 6.5M162.5 0.5L165.5 3.5L162.5 6.5M170.5 0.5L173.5 3.5L170.5 6.5M178.5 0.5L181.5 3.5L178.5 6.5M186.5 0.5L189.5 3.5L186.5 6.5M194.5 0.5L197.5 3.5L194.5 6.5M202.5 0.5L205.5 3.5L202.5 6.5M210.5 0.5L213.5 3.5L210.5 6.5M218.5 0.5L221.5 3.5L218.5 6.5M226.5 0.5L229.5 3.5L226.5 6.5M234.5 0.5L237.5 3.5L234.5 6.5M242.5 0.5L245.5 3.5L242.5 6.5M250.5 0.5L253.5 3.5L250.5 6.5M258.5 0.5L261.5 3.5L258.5 6.5M266.5 0.5L269.5 3.5L266.5 6.5M274.5 0.5L277.5 3.5L274.5 6.5M282.5 0.5L285.5 3.5L282.5 6.5M290.5 0.5L293.5 3.5L290.5 6.5M298.5 0.5L301.5 3.5L298.5 6.5M306.5 0.5L309.5 3.5L306.5 6.5M314.5 0.5L317.5 3.5L314.5 6.5M322.5 0.5L325.5 3.5L322.5 6.5M330.5 0.5L333.5 3.5L330.5 6.5M338.5 0.5L341.5 3.5L338.5 6.5M346.5 0.5L349.5 3.5L346.5 6.5M354.5 0.5L357.5 3.5L354.5 6.5M362.5 0.5L365.5 3.5L362.5 6.5M370.5 0.5L373.5 3.5L370.5 6.5M378.5 0.5L381.5 3.5L378.5 6.5M386.5 0.5L389.5 3.5L386.5 6.5M394.5 0.5L397.5 3.5L394.5 6.5M402.5 0.5L405.5 3.5L402.5 6.5M410.5 0.5L413.5 3.5L410.5 6.5M418.5 0.5L421.5 3.5L418.5 6.5M426.5 0.5L429.5 3.5L426.5 6.5M434.5 0.5L437.5 3.5L434.5 6.5M442.5 0.5L445.5 3.5L442.5 6.5M450.5 0.5L453.5 3.5L450.5 6.5M458.5 0.5L461.5 3.5L458.5 6.5M466.5 0.5L469.5 3.5L466.5 6.5M474.5 0.5L477.5 3.5L474.5 6.5M482.5 0.5L485.5 3.5L482.5 6.5M490.5 0.5L493.5 3.5L490.5 6.5M498.5 0.5L501.5 3.5L498.5 6.5M506.5 0.5L509.5 3.5L506.5 6.5M514.5 0.5L517.5 3.5L514.5 6.5M522.5 0.5L525.5 3.5L522.5 6.5M530.5 0.5L533.5 3.5L530.5 6.5M538.5 0.5L541.5 3.5L538.5 6.5M546.5 0.5L549.5 3.5L546.5 6.5M554.5 0.5L557.5 3.5L554.5 6.5M562.5 0.5L565.5 3.5L562.5 6.5M570.5 0.5L573.5 3.5L570.5 6.5M578.5 0.5L581.5 3.5L578.5 6.5M586.5 0.5L589.5 3.5L586.5 6.5M594.5 0.5L597.5 3.5L594.5 6.5M602.5 0.5L605.5 3.5L602.5 6.5M610.5 0.5L613.5 3.5L610.5 6.5M618.5 0.5L621.5 3.5L618.5 6.5M626.5 0.5L629.5 3.5L626.5 6.5M634.5 0.5L637.5 3.5L634.5 6.5M642.5 0.5L645.5 3.5L642.5 6.5M650.5 0.5L653.5 3.5L650.5 6.5M658.5 0.5L661.5 3.5L658.5 6.5M666.5 0.5L669.5 3.5L666.5 6.5M674.5 0.5L677.5 3.5L674.5 6.5M682.5 0.5L685.5 3.5L682.5 6.5M690.5 0.5L693.5 3.5L690.5 6.5M698.5 0.5L701.5 3.5L698.5 6.5M706.5 0.5L709.5 3.5L706.5 6.5M714.5 0.5L717.5 3.5L714.5 6.5M722.5 0.5L725.5 3.5L722.5 6.5M730.5 0.5L733.5 3.5L730.5 6.5M738.5 0.5L741.5 3.5L738.5 6.5M746.5 0.5L749.5 3.5L746.5 6.5M754.5 0.5L757.5 3.5L754.5 6.5M762.5 0.5L765.5 3.5L762.5 6.5M770.5 0.5L773.5 3.5L770.5 6.5M778.5 0.5L781.5 3.5L778.5 6.5M786.5 0.5L789.5 3.5L786.5 6.5" stroke="#0c0c78" stroke-width="1" fill="none"/></svg>
<div class="t" style="left:98.77px;top:176px;width:52.73px;color:#0c0c78;transform:scaleX(1.0051);transform-origin:100% 0"><u>TMEM</u><b>51</b></div>
<svg class="b" style="left:157px;top:180px" width="792" height="7" viewBox="0 0 792 7"><path d="M0 3.5H792" stroke="#0c0c78" stroke-width="1" fill="none"/><path d="M2.5 0.5L5.5 3.5L2.5 6.5M10.5 0.5L13.5 3.5L10.5 6.5M18.5 0.5L21.5 3.5L18.5 6.5M26.5 0.5L29.5 3.5L26.5 6.5M34.5 0.5L37.5 3.5L34.5 6.5M42.5 0.5L45.5 3.5L42.5 6.5M50.5 0.5L53.5 3.5L50.5 6.5M58.5 0.5L61.5 3.5L58.5 6.5M66.5 0.5L69.5 3.5L66.5 6.5M74.5 0.5L77.5 3.5L74.5 6.5M82.5 0.5L85.5 3.5L82.5 6.5M90.5 0.5L93.5 3.5L90.5 6.5M98.5 0.5L101.5 3.5L98.5 6.5M106.5 0.5L109.5 3.5L106.5 6.5M114.5 0.5L117.5 3.5L114.5 6.5M122.5 0.5L125.5 3.5L122.5 6.5M130.5 0.5L133.5 3.5L130.5 6.5M138.5 0.5L141.5 3.5L138.5 6.5M146.5 0.5L149.5 3.5L146.5 6.5M154.5 0.5L157.5 3.5L154.5 6.5M162.5 0.5L165.5 3.5L162.5 6.5M170.5 0.5L173.5 3.5L170.5 6.5M178.5 0.5L181.5 3.5L178.5 6.5M186.5 0.5L189.5 3.5L186.5 6.5M194.5 0.5L197.5 3.5L194.5 6.5M202.5 0.5L205.5 3.5L202.5 6.5M210.5 0.5L213.5 3.5L210.5 6.5M218.5 0.5L221.5 3.5L218.5 6.5M226.5 0.5L229.5 3.5L226.5 6.5M234.5 0.5L237.5 3.5L234.5 6.5M242.5 0.5L245.5 3.5L242.5 6.5M250.5 0.5L253.5 3.5L250.5 6.5M258.5 0.5L261.5 3.5L258.5 6.5M266.5 0.5L269.5 3.5L266.5 6.5M274.5 0.5L277.5 3.5L274.5 6.5M282.5 0.5L285.5 3.5L282.5 6.5M290.5 0.5L293.5 3.5L290.5 6.5M298.5 0.5L301.5 3.5L298.5 6.5M306.5 0.5L309.5 3.5L306.5 6.5M314.5 0.5L317.5 3.5L314.5 6.5M322.5 0.5L325.5 3.5L322.5 6.5M330.5 0.5L333.5 3.5L330.5 6.5M338.5 0.5L341.5 3.5L338.5 6.5M346.5 0.5L349.5 3.5L346.5 6.5M354.5 0.5L357.5 3.5L354.5 6.5M362.5 0.5L365.5 3.5L362.5 6.5M370.5 0.5L373.5 3.5L370.5 6.5M378.5 0.5L381.5 3.5L378.5 6.5M386.5 0.5L389.5 3.5L386.5 6.5M394.5 0.5L397.5 3.5L394.5 6.5M402.5 0.5L405.5 3.5L402.5 6.5M410.5 0.5L413.5 3.5L410.5 6.5M418.5 0.5L421.5 3.5L418.5 6.5M426.5 0.5L429.5 3.5L426.5 6.5M434.5 0.5L437.5 3.5L434.5 6.5M442.5 0.5L445.5 3.5L442.5 6.5M450.5 0.5L453.5 3.5L450.5 6.5M458.5 0.5L461.5 3.5L458.5 6.5M466.5 0.5L469.5 3.5L466.5 6.5M474.5 0.5L477.5 3.5L474.5 6.5M482.5 0.5L485.5 3.5L482.5 6.5M490.5 0.5L493.5 3.5L490.5 6.5M498.5 0.5L501.5 3.5L498.5 6.5M506.5 0.5L509.5 3.5L506.5 6.5M514.5 0.5L517.5 3.5L514.5 6.5M522.5 0.5L525.5 3.5L522.5 6.5M530.5 0.5L533.5 3.5L530.5 6.5M538.5 0.5L541.5 3.5L538.5 6.5M546.5 0.5L549.5 3.5L546.5 6.5M554.5 0.5L557.5 3.5L554.5 6.5M562.5 0.5L565.5 3.5L562.5 6.5M570.5 0.5L573.5 3.5L570.5 6.5M578.5 0.5L581.5 3.5L578.5 6.5M586.5 0.5L589.5 3.5L586.5 6.5M594.5 0.5L597.5 3.5L594.5 6.5M602.5 0.5L605.5 3.5L602.5 6.5M610.5 0.5L613.5 3.5L610.5 6.5M618.5 0.5L621.5 3.5L618.5 6.5M626.5 0.5L629.5 3.5L626.5 6.5M634.5 0.5L637.5 3.5L634.5 6.5M642.5 0.5L645.5 3.5L642.5 6.5M650.5 0.5L653.5 3.5L650.5 6.5M658.5 0.5L661.5 3.5L658.5 6.5M666.5 0.5L669.5 3.5L666.5 6.5M674.5 0.5L677.5 3.5L674.5 6.5M682.5 0.5L685.5 3.5L682.5 6.5M690.5 0.5L693.5 3.5L690.5 6.5M698.5 0.5L701.5 3.5L698.5 6.5M706.5 0.5L709.5 3.5L706.5 6.5M714.5 0.5L717.5 3.5L714.5 6.5M722.5 0.5L725.5 3.5L722.5 6.5M730.5 0.5L733.5 3.5L730.5 6.5M738.5 0.5L741.5 3.5L738.5 6.5M746.5 0.5L749.5 3.5L746.5 6.5M754.5 0.5L757.5 3.5L754.5 6.5M762.5 0.5L765.5 3.5L762.5 6.5M770.5 0.5L773.5 3.5L770.5 6.5M778.5 0.5L781.5 3.5L778.5 6.5M786.5 0.5L789.5 3.5L786.5 6.5" stroke="#0c0c78" stroke-width="1" fill="none"/></svg>
<div class="t" style="left:98.77px;top:192px;width:52.73px;color:#0c0c78;transform:scaleX(1.0051);transform-origin:100% 0"><u>TMEM</u><b>51</b></div>
<svg class="b" style="left:157px;top:196px" width="792" height="7" viewBox="0 0 792 7"><path d="M0 3.5H792" stroke="#0c0c78" stroke-width="1" fill="none"/><path d="M2.5 0.5L5.5 3.5L2.5 6.5M10.5 0.5L13.5 3.5L10.5 6.5M18.5 0.5L21.5 3.5L18.5 6.5M26.5 0.5L29.5 3.5L26.5 6.5M34.5 0.5L37.5 3.5L34.5 6.5M42.5 0.5L45.5 3.5L42.5 6.5M50.5 0.5L53.5 3.5L50.5 6.5M58.5 0.5L61.5 3.5L58.5 6.5M66.5 0.5L69.5 3.5L66.5 6.5M74.5 0.5L77.5 3.5L74.5 6.5M82.5 0.5L85.5 3.5L82.5 6.5M90.5 0.5L93.5 3.5L90.5 6.5M98.5 0.5L101.5 3.5L98.5 6.5M106.5 0.5L109.5 3.5L106.5 6.5M114.5 0.5L117.5 3.5L114.5 6.5M122.5 0.5L125.5 3.5L122.5 6.5M130.5 0.5L133.5 3.5L130.5 6.5M138.5 0.5L141.5 3.5L138.5 6.5M146.5 0.5L149.5 3.5L146.5 6.5M154.5 0.5L157.5 3.5L154.5 6.5M162.5 0.5L165.5 3.5L162.5 6.5M170.5 0.5L173.5 3.5L170.5 6.5M178.5 0.5L181.5 3.5L178.5 6.5M186.5 0.5L189.5 3.5L186.5 6.5M194.5 0.5L197.5 3.5L194.5 6.5M202.5 0.5L205.5 3.5L202.5 6.5M210.5 0.5L213.5 3.5L210.5 6.5M218.5 0.5L221.5 3.5L218.5 6.5M226.5 0.5L229.5 3.5L226.5 6.5M234.5 0.5L237.5 3.5L234.5 6.5M242.5 0.5L245.5 3.5L242.5 6.5M250.5 0.5L253.5 3.5L250.5 6.5M258.5 0.5L261.5 3.5L258.5 6.5M266.5 0.5L269.5 3.5L266.5 6.5M274.5 0.5L277.5 3.5L274.5 6.5M282.5 0.5L285.5 3.5L282.5 6.5M290.5 0.5L293.5 3.5L290.5 6.5M298.5 0.5L301.5 3.5L298.5 6.5M306.5 0.5L309.5 3.5L306.5 6.5M314.5 0.5L317.5 3.5L314.5 6.5M322.5 0.5L325.5 3.5L322.5 6.5M330.5 0.5L333.5 3.5L330.5 6.5M338.5 0.5L341.5 3.5L338.5 6.5M346.5 0.5L349.5 3.5L346.5 6.5M354.5 0.5L357.5 3.5L354.5 6.5M362.5 0.5L365.5 3.5L362.5 6.5M370.5 0.5L373.5 3.5L370.5 6.5M378.5 0.5L381.5 3.5L378.5 6.5M386.5 0.5L389.5 3.5L386.5 6.5M394.5 0.5L397.5 3.5L394.5 6.5M402.5 0.5L405.5 3.5L402.5 6.5M410.5 0.5L413.5 3.5L410.5 6.5M418.5 0.5L421.5 3.5L418.5 6.5M426.5 0.5L429.5 3.5L426.5 6.5M434.5 0.5L437.5 3.5L434.5 6.5M442.5 0.5L445.5 3.5L442.5 6.5M450.5 0.5L453.5 3.5L450.5 6.5M458.5 0.5L461.5 3.5L458.5 6.5M466.5 0.5L469.5 3.5L466.5 6.5M474.5 0.5L477.5 3.5L474.5 6.5M482.5 0.5L485.5 3.5L482.5 6.5M490.5 0.5L493.5 3.5L490.5 6.5M498.5 0.5L501.5 3.5L498.5 6.5M506.5 0.5L509.5 3.5L506.5 6.5M514.5 0.5L517.5 3.5L514.5 6.5M522.5 0.5L525.5 3.5L522.5 6.5M530.5 0.5L533.5 3.5L530.5 6.5M538.5 0.5L541.5 3.5L538.5 6.5M546.5 0.5L549.5 3.5L546.5 6.5M554.5 0.5L557.5 3.5L554.5 6.5M562.5 0.5L565.5 3.5L562.5 6.5M570.5 0.5L573.5 3.5L570.5 6.5M578.5 0.5L581.5 3.5L578.5 6.5M586.5 0.5L589.5 3.5L586.5 6.5M594.5 0.5L597.5 3.5L594.5 6.5M602.5 0.5L605.5 3.5L602.5 6.5M610.5 0.5L613.5 3.5L610.5 6.5M618.5 0.5L621.5 3.5L618.5 6.5M626.5 0.5L629.5 3.5L626.5 6.5M634.5 0.5L637.5 3.5L634.5 6.5M642.5 0.5L645.5 3.5L642.5 6.5M650.5 0.5L653.5 3.5L650.5 6.5M658.5 0.5L661.5 3.5L658.5 6.5M666.5 0.5L669.5 3.5L666.5 6.5M674.5 0.5L677.5 3.5L674.5 6.5M682.5 0.5L685.5 3.5L682.5 6.5M690.5 0.5L693.5 3.5L690.5 6.5M698.5 0.5L701.5 3.5L698.5 6.5M706.5 0.5L709.5 3.5L706.5 6.5M714.5 0.5L717.5 3.5L714.5 6.5M722.5 0.5L725.5 3.5L722.5 6.5M730.5 0.5L733.5 3.5L730.5 6.5M738.5 0.5L741.5 3.5L738.5 6.5M746.5 0.5L749.5 3.5L746.5 6.5M754.5 0.5L757.5 3.5L754.5 6.5M762.5 0.5L765.5 3.5L762.5 6.5M770.5 0.5L773.5 3.5L770.5 6.5M778.5 0.5L781.5 3.5L778.5 6.5M786.5 0.5L789.5 3.5L786.5 6.5" stroke="#0c0c78" stroke-width="1" fill="none"/></svg>
<div class="t" style="left:98.77px;top:208px;width:52.73px;color:#0c0c78;transform:scaleX(1.0051);transform-origin:100% 0"><u>TMEM</u><b>51</b></div>
<svg class="b" style="left:157px;top:212px" width="792" height="7" viewBox="0 0 792 7"><path d="M0 3.5H792" stroke="#0c0c78" stroke-width="1" fill="none"/><path d="M2.5 0.5L5.5 3.5L2.5 6.5M10.5 0.5L13.5 3.5L10.5 6.5M18.5 0.5L21.5 3.5L18.5 6.5M26.5 0.5L29.5 3.5L26.5 6.5M34.5 0.5L37.5 3.5L34.5 6.5M42.5 0.5L45.5 3.5L42.5 6.5M50.5 0.5L53.5 3.5L50.5 6.5M58.5 0.5L61.5 3.5L58.5 6.5M66.5 0.5L69.5 3.5L66.5 6.5M74.5 0.5L77.5 3.5L74.5 6.5M82.5 0.5L85.5 3.5L82.5 6.5M90.5 0.5L93.5 3.5L90.5 6.5M98.5 0.5L101.5 3.5L98.5 6.5M106.5 0.5L109.5 3.5L106.5 6.5M114.5 0.5L117.5 3.5L114.5 6.5M122.5 0.5L125.5 3.5L122.5 6.5M130.5 0.5L133.5 3.5L130.5 6.5M138.5 0.5L141.5 3.5L138.5 6.5M146.5 0.5L149.5 3.5L146.5 6.5M154.5 0.5L157.5 3.5L154.5 6.5M162.5 0.5L165.5 3.5L162.5 6.5M170.5 0.5L173.5 3.5L170.5 6.5M178.5 0.5L181.5 3.5L178.5 6.5M186.5 0.5L189.5 3.5L186.5 6.5M194.5 0.5L197.5 3.5L194.5 6.5M202.5 0.5L205.5 3.5L202.5 6.5M210.5 0.5L213.5 3.5L210.5 6.5M218.5 0.5L221.5 3.5L218.5 6.5M226.5 0.5L229.5 3.5L226.5 6.5M234.5 0.5L237.5 3.5L234.5 6.5M242.5 0.5L245.5 3.5L242.5 6.5M250.5 0.5L253.5 3.5L250.5 6.5M258.5 0.5L261.5 3.5L258.5 6.5M266.5 0.5L269.5 3.5L266.5 6.5M274.5 0.5L277.5 3.5L274.5 6.5M282.5 0.5L285.5 3.5L282.5 6.5M290.5 0.5L293.5 3.5L290.5 6.5M298.5 0.5L301.5 3.5L298.5 6.5M306.5 0.5L309.5 3.5L306.5 6.5M314.5 0.5L317.5 3.5L314.5 6.5M322.5 0.5L325.5 3.5L322.5 6.5M330.5 0.5L333.5 3.5L330.5 6.5M338.5 0.5L341.5 3.5L338.5 6.5M346.5 0.5L349.5 3.5L346.5 6.5M354.5 0.5L357.5 3.5L354.5 6.5M362.5 0.5L365.5 3.5L362.5 6.5M370.5 0.5L373.5 3.5L370.5 6.5M378.5 0.5L381.5 3.5L378.5 6.5M386.5 0.5L389.5 3.5L386.5 6.5M394.5 0.5L397.5 3.5L394.5 6.5M402.5 0.5L405.5 3.5L402.5 6.5M410.5 0.5L413.5 3.5L410.5 6.5M418.5 0.5L421.5 3.5L418.5 6.5M426.5 0.5L429.5 3.5L426.5 6.5M434.5 0.5L437.5 3.5L434.5 6.5M442.5 0.5L445.5 3.5L442.5 6.5M450.5 0.5L453.5 3.5L450.5 6.5M458.5 0.5L461.5 3.5L458.5 6.5M466.5 0.5L469.5 3.5L466.5 6.5M474.5 0.5L477.5 3.5L474.5 6.5M482.5 0.5L485.5 3.5L482.5 6.5M490.5 0.5L493.5 3.5L490.5 6.5M498.5 0.5L501.5 3.5L498.5 6.5M506.5 0.5L509.5 3.5L506.5 6.5M514.5 0.5L517.5 3.5L514.5 6.5M522.5 0.5L525.5 3.5L522.5 6.5M530.5 0.5L533.5 3.5L530.5 6.5M538.5 0.5L541.5 3.5L538.5 6.5M546.5 0.5L549.5 3.5L546.5 6.5M554.5 0.5L557.5 3.5L554.5 6.5M562.5 0.5L565.5 3.5L562.5 6.5M570.5 0.5L573.5 3.5L570.5 6.5M578.5 0.5L581.5 3.5L578.5 6.5M586.5 0.5L589.5 3.5L586.5 6.5M594.5 0.5L597.5 3.5L594.5 6.5M602.5 0.5L605.5 3.5L602.5 6.5M610.5 0.5L613.5 3.5L610.5 6.5M618.5 0.5L621.5 3.5L618.5 6.5M626.5 0.5L629.5 3.5L626.5 6.5M634.5 0.5L637.5 3.5L634.5 6.5M642.5 0.5L645.5 3.5L642.5 6.5M650.5 0.5L653.5 3.5L650.5 6.5M658.5 0.5L661.5 3.5L658.5 6.5M666.5 0.5L669.5 3.5L666.5 6.5M674.5 0.5L677.5 3.5L674.5 6.5M682.5 0.5L685.5 3.5L682.5 6.5M690.5 0.5L693.5 3.5L690.5 6.5M698.5 0.5L701.5 3.5L698.5 6.5M706.5 0.5L709.5 3.5L706.5 6.5M714.5 0.5L717.5 3.5L714.5 6.5M722.5 0.5L725.5 3.5L722.5 6.5M730.5 0.5L733.5 3.5L730.5 6.5M738.5 0.5L741.5 3.5L738.5 6.5M746.5 0.5L749.5 3.5L746.5 6.5M754.5 0.5L757.5 3.5L754.5 6.5M762.5 0.5L765.5 3.5L762.5 6.5M770.5 0.5L773.5 3.5L770.5 6.5M778.5 0.5L781.5 3.5L778.5 6.5M786.5 0.5L789.5 3.5L786.5 6.5" stroke="#0c0c78" stroke-width="1" fill="none"/></svg>
<div class="t s" style="left:490.45px;top:226px;width:124.11px;transform:scaleX(0.9911);transform-origin:50% 0"><u>R</u>ef<u>S</u>eq genes from <u>NCBI</u></div>
<div class="t" style="left:58.28px;top:239px;width:93.22px;color:#0c0c78;transform:scaleX(0.9869);transform-origin:100% 0"><u>R</u>ef<u>S</u>eq <u>C</u>urated</div>
<div class="b" style="left:157px;top:246px;width:792px;height:1px;background:#0c0c78"></div>
<div class="t s" style="left:444.36px;top:257px;width:218.28px;transform:scaleX(0.9850);transform-origin:50% 0"><u>P</u>ublications: <u>S</u>equences in <u>S</u>cientific <u>A</u>rticles</div>
<div class="t" style="left:86.45px;top:270px;width:65.05px;transform:scaleX(0.9992);transform-origin:100% 0"><u>S</u>equences</div>
<div class="t" style="left:118.27px;top:286px;width:33.23px;transform:scaleX(1.0232);transform-origin:100% 0"><u>SNP</u>s</div>
<div class="t" style="left:368.25px;top:303px;width:368.50px;color:#005400;transform:scaleX(1.0014);transform-origin:50% 0"><u>OMIM</u> <u>G</u>ene <u>P</u>henotypes - <u>D</u>ark <u>G</u>reen <u>C</u>an <u>B</u>e <u>D</u>isease-causing</div>
<div class="t" style="left:74.2px;top:317px;width:77.30px;color:#005400;transform:scaleX(1.0091);transform-origin:100% 0"><u>OMIM</u> <u>G</u>enes</div>
<div class="t s" style="left:435.41px;top:335px;width:234.17px;transform:scaleX(0.9907);transform-origin:50% 0"><u>S</u>hort <u>G</u>enetic <u>V</u>ariants from db<u>SNP</u> release <b>155</b></div>
<div class="t" style="left:23.61px;top:348px;width:127.89px;transform:scaleX(0.9853);transform-origin:100% 0"><u>C</u>ommon db<u>SNP</u>(<b>155</b>)</div>
<div class="t" style="left:268.52px;top:365px;width:567.96px;transform:scaleX(1.0071);transform-origin:50% 0"><u>G</u>ene <u>E</u>xpression in <b>54</b> tissues from <u>GTE</u>x <u>RNA</u>-seq of <b>17382</b> samples, <b>948</b> donors (<u>V</u><b>8</b>, <u>A</u>ug <b>2019</b>)</div>
<div class="t" style="left:98.77px;top:399px;width:52.73px;transform:scaleX(1.0051);transform-origin:100% 0"><u>TMEM</u><b>51</b></div>
<div class="b" style="left:156px;top:380px;width:378px;height:49px;background:#f2f2f2"></div>
<div class="b" style="left:157px;top:381px;width:376px;height:47px;background:#fff"></div>
<div class="b" style="left:156px;top:404px;width:5px;height:24px;background:#FFA54F"></div>
<div class="b" style="left:163px;top:402px;width:5px;height:26px;background:#EE9A00"></div>
<div class="b" style="left:170px;top:387px;width:5px;height:41px;background:#8FBC8F"></div>
<div class="b" style="left:177px;top:402px;width:5px;height:26px;background:#8B1C62"></div>
<div class="b" style="left:184px;top:388px;width:5px;height:40px;background:#EE6A50"></div>
<div class="b" style="left:191px;top:390px;width:5px;height:38px;background:#FF0000"></div>
<div class="b" style="left:198px;top:385px;width:5px;height:43px;background:#CDB79E"></div>
<div class="b" style="left:205px;top:405px;width:5px;height:23px;background:#EEEE00"></div>
<div class="b" style="left:212px;top:407px;width:5px;height:21px;background:#EEEE00"></div>
<div class="b" style="left:219px;top:406px;width:5px;height:22px;background:#EEEE00"></div>
<div class="b" style="left:226px;top:384px;width:5px;height:44px;background:#EEEE00"></div>
<div class="b" style="left:233px;top:385px;width:5px;height:43px;background:#EEEE00"></div>
<div class="b" style="left:240px;top:407px;width:5px;height:21px;background:#EEEE00"></div>
<div class="b" style="left:247px;top:407px;width:5px;height:21px;background:#EEEE00"></div>
<div class="b" style="left:254px;top:408px;width:5px;height:20px;background:#EEEE00"></div>
<div class="b" style="left:261px;top:412px;width:5px;height:16px;background:#EEEE00"></div>
<div class="b" style="left:268px;top:409px;width:5px;height:19px;background:#EEEE00"></div>
<div class="b" style="left:275px;top:407px;width:5px;height:21px;background:#EEEE00"></div>
<div class="b" style="left:282px;top:408px;width:5px;height:20px;background:#EEEE00"></div>
<div class="b" style="left:289px;top:409px;width:5px;height:19px;background:#EEEE00"></div>
<div class="b" style="left:296px;top:399px;width:5px;height:29px;background:#00CDCD"></div>
<div class="b" style="left:303px;top:407px;width:5px;height:21px;background:#EE82EE"></div>
<div class="b" style="left:310px;top:414px;width:5px;height:14px;background:#9AC0CD"></div>
<div class="b" style="left:317px;top:388px;width:5px;height:40px;background:#EED5D2"></div>
<div class="b" style="left:324px;top:389px;width:5px;height:39px;background:#EED5D2"></div>
<div class="b" style="left:331px;top:384px;width:5px;height:44px;background:#CDB79E"></div>
<div class="b" style="left:338px;top:388px;width:5px;height:40px;background:#EEC591"></div>
<div class="b" style="left:345px;top:393px;width:5px;height:35px;background:#8B7355"></div>
<div class="b" style="left:352px;top:389px;width:5px;height:39px;background:#8B7355"></div>
<div class="b" style="left:359px;top:396px;width:5px;height:32px;background:#CDAA7D"></div>
<div class="b" style="left:366px;top:389px;width:5px;height:39px;background:#EED5D2"></div>
<div class="b" style="left:373px;top:410px;width:5px;height:18px;background:#B452CD"></div>
<div class="b" style="left:380px;top:412px;width:5px;height:16px;background:#7A378B"></div>
<div class="b" style="left:387px;top:384px;width:5px;height:44px;background:#CDB79E"></div>
<div class="b" style="left:394px;top:380px;width:5px;height:48px;background:#CDB79E"></div>
<div class="b" style="left:401px;top:414px;width:5px;height:14px;background:#CDB79E"></div>
<div class="b" style="left:408px;top:387px;width:5px;height:41px;background:#9ACD32"></div>
<div class="b" style="left:415px;top:394px;width:5px;height:34px;background:#CDB79E"></div>
<div class="b" style="left:422px;top:419px;width:5px;height:9px;background:#7A67EE"></div>
<div class="b" style="left:429px;top:395px;width:5px;height:33px;background:#FFD700"></div>
<div class="b" style="left:436px;top:381px;width:5px;height:47px;background:#FFB6C1"></div>
<div class="b" style="left:443px;top:386px;width:5px;height:42px;background:#CD9B1D"></div>
<div class="b" style="left:450px;top:396px;width:5px;height:32px;background:#B4EEB4"></div>
<div class="b" style="left:457px;top:385px;width:5px;height:43px;background:#D9D9D9"></div>
<div class="b" style="left:464px;top:396px;width:5px;height:32px;background:#3A5FCD"></div>
<div class="b" style="left:471px;top:398px;width:5px;height:30px;background:#1E90FF"></div>
<div class="b" style="left:478px;top:390px;width:5px;height:38px;background:#CDB79E"></div>
<div class="b" style="left:485px;top:397px;width:5px;height:31px;background:#CDB79E"></div>
<div class="b" style="left:492px;top:383px;width:5px;height:45px;background:#FFD39B"></div>
<div class="b" style="left:499px;top:405px;width:5px;height:23px;background:#A6A6A6"></div>
<div class="b" style="left:506px;top:399px;width:5px;height:29px;background:#008B45"></div>
<div class="b" style="left:513px;top:396px;width:5px;height:32px;background:#EED5D2"></div>
<div class="b" style="left:520px;top:384px;width:5px;height:44px;background:#EED5D2"></div>
<div class="b" style="left:527px;top:422px;width:5px;height:6px;background:#FF00FF"></div>
<div class="b" style="left:156px;top:429px;width:793px;height:2px;background:#000070"></div>
<div class="t" style="left:282.87px;top:434px;width:538.26px;transform:scaleX(1.0069);transform-origin:50% 0"><u>H</u><b>3</b><u>K</u><b>27</b><u>A</u>c <u>M</u>ark (<u>O</u>ften <u>F</u>ound <u>N</u>ear <u>A</u>ctive <u>R</u>egulatory <u>E</u>lements) on <b>7</b> cell lines from <u>ENCODE</u></div>
<div class="t" style="left:13px;top:448px;width:105.51px;transform:scaleX(0.9952);transform-origin:0 0"><u>L</u>ayered <u>H</u><b>3</b><u>K</u><b>27</b><u>A</u>c</div>
<div class="b" style="left:156px;top:473px;width:264px;height:2px;background:#80dcff"></div>
<div class="b" style="left:156px;top:475px;width:793px;height:2px;background:#6a2bd0"></div>
<div class="b" style="left:156px;top:477px;width:793px;height:1px;background:#14002e"></div>
<div class="b" style="left:420px;top:472px;width:529px;height:2px;background:#80dcff"></div>
<div class="b" style="left:420px;top:474px;width:529px;height:1px;background:#6b6bff"></div>
<div class="t" style="left:406.53px;top:480px;width:291.94px;color:#34348a;transform:scaleX(1.0071);transform-origin:50% 0"><b>100</b> vertebrates <u>B</u>asewise <u>C</u>onservation by <u>P</u>hylo<u>P</u></div>
<div class="t" style="left:115.7px;top:479px;width:25.30px;color:#34348a;transform:scaleX(0.9881);transform-origin:100% 0"><b>4</b>.<b>88</b></div>
<div class="b" style="left:145px;top:492px;width:8px;height:1px;background:#6a6aa8"></div>
<div class="t" style="left:13px;top:504px;width:86.72px;color:#34348a;transform:scaleX(1.0033);transform-origin:0 0"><b>100</b> <u>V</u>ert. <u>C</u>ons</div>
<div class="t" style="left:118.6px;top:529px;width:22.40px;color:#8b2323;transform:scaleX(0.9821);transform-origin:100% 0">-<b>4</b>.<b>5</b></div>
<div class="b" style="left:145px;top:542px;width:8px;height:1px;background:#a85a5a"></div>
<svg class="b" style="left:212px;top:511px" width="46" height="11" viewBox="0 0 46 11"><path d="M1 5.17Q1 3.18 6.92 2.09Q12.84 1 23.55 1Q31.07 1 35.77 1.46Q40.46 1.92 43 2.92L37.15 3.24Q35.22 2.54 31.83 2.22Q28.43 1.9 23.38 1.9Q15.54 1.9 11.39 2.76Q7.24 3.61 7.24 5.17Q7.24 6.71 11.65 7.61Q16.05 8.5 23.83 8.5Q28.27 8.5 32.12 8.26Q35.96 8.02 38.34 7.6V6.13H24.8V5.2H44V8.02Q40.4 8.68 35.17 9.04Q29.95 9.4 23.83 9.4Q16.73 9.4 11.58 8.89Q6.44 8.38 3.72 7.42Q1 6.46 1 5.17Z" fill="#0000ff"/></svg>
<div class="b" style="left:267px;top:518px;width:42px;height:1px;background:#0000ff;opacity:0.38"></div>
<div class="b" style="left:267px;top:518px;width:6px;height:1px;background:#0000ff;opacity:0.3"></div>
<svg class="b" style="left:371px;top:516px" width="46" height="4" viewBox="0 0 46 4"><path d="M1 2.04Q1 1.69 6.92 1.49Q12.84 1.3 23.55 1.3Q31.07 1.3 35.77 1.38Q40.46 1.46 43 1.64L37.15 1.7Q35.22 1.58 31.83 1.52Q28.43 1.46 23.38 1.46Q15.54 1.46 11.39 1.61Q7.24 1.77 7.24 2.04Q7.24 2.32 11.65 2.48Q16.05 2.64 23.83 2.64Q28.27 2.64 32.12 2.6Q35.96 2.55 38.34 2.48V2.22H24.8V2.05H44V2.55Q40.4 2.67 35.17 2.74Q29.95 2.8 23.83 2.8Q16.73 2.8 11.58 2.71Q6.44 2.62 3.72 2.45Q1 2.28 1 2.04Z" fill="#0000ff"/></svg>
<div class="b" style="left:372px;top:518px;width:43px;height:1px;background:#0000ff;opacity:0.18"></div>
<div class="b" style="left:408px;top:518px;width:7px;height:1px;background:#0000ff;opacity:0.55"></div>
<svg class="b" style="left:476px;top:519px" width="40" height="4" viewBox="0 0 40 4"><path d="M22.54 1.11V2H16.46V1.11H1V1H38V1.11Z" fill="#00ff00"/></svg>
<div class="b" style="left:476px;top:520px;width:42px;height:1px;background:#00ff00;opacity:0.12"></div>
<svg class="b" style="left:475px;top:520px" width="45" height="4" viewBox="0 0 45 4"><path d="M23.28 1.11Q15.7 1.11 11.49 1.21Q7.28 1.32 7.28 1.5Q7.28 1.67 11.67 1.78Q16.06 1.89 23.54 1.89Q33.12 1.89 37.95 1.69L43 1.74Q40.18 1.87 35.08 1.93Q29.98 2 23.25 2Q16.35 2 11.31 1.94Q6.28 1.88 3.64 1.76Q1 1.65 1 1.5Q1 1.26 6.89 1.13Q12.79 1 23.21 1Q30.5 1 35.39 1.06Q40.28 1.12 42.58 1.24L36.72 1.28Q35.13 1.2 31.62 1.15Q28.1 1.11 23.28 1.11Z" fill="#9c9c00"/></svg>
<div class="b" style="left:530px;top:518px;width:40px;height:1px;background:#ff0000;opacity:0.4"></div>
<div class="b" style="left:536px;top:518px;width:10px;height:1px;background:#ff0000;opacity:0.2"></div>
<div class="b" style="left:553px;top:518px;width:12px;height:1px;background:#ff0000;opacity:0.2"></div>
<svg class="b" style="left:741px;top:513px" width="44" height="9" viewBox="0 0 44 9"><path d="M22.75 1.66Q15.35 1.66 11.24 2.29Q7.13 2.92 7.13 4.02Q7.13 5.11 11.42 5.78Q15.7 6.44 23 6.44Q32.36 6.44 37.07 5.21L42 5.54Q39.25 6.3 34.27 6.7Q29.29 7.1 22.72 7.1Q15.98 7.1 11.07 6.73Q6.15 6.36 3.58 5.66Q1 4.97 1 4.02Q1 2.61 6.75 1.8Q12.51 1 22.69 1Q29.8 1 34.57 1.37Q39.34 1.74 41.59 2.47L35.87 2.72Q34.32 2.2 30.89 1.93Q27.46 1.66 22.75 1.66Z" fill="#9c9c00"/></svg>
<svg class="b" style="left:898px;top:514px" width="41" height="8" viewBox="0 0 41 8"><path d="M23.12 1.55V6H16.88V1.55H1V1H39V1.55Z" fill="#00ff00"/></svg>
<div class="t" style="left:446.28px;top:546px;width:212.44px;color:#050570;transform:scaleX(1.0121);transform-origin:50% 0"><u>M</u>ultiz <u>A</u>lignments of <b>100</b> <u>V</u>ertebrates</div>
<div class="t" style="left:120.43px;top:560px;width:31.07px;color:#e08000;transform:scaleX(0.9977);transform-origin:100% 0"><u>G</u>aps</div>
<div class="t" style="left:109.59px;top:575px;width:41.91px;color:#050570;transform:scaleX(0.9784);transform-origin:100% 0"><u>H</u>uman</div>
<div class="t" style="left:107.42px;top:590px;width:44.08px;color:#050570;transform:scaleX(0.9982);transform-origin:100% 0"><u>R</u>hesus</div>
<div class="t" style="left:112.48px;top:605px;width:39.02px;color:#005400;transform:scaleX(0.9995);transform-origin:100% 0"><u>M</u>ouse</div>
<div class="t" style="left:127.65px;top:620px;width:23.85px;color:#050570;transform:scaleX(0.9644);transform-origin:100% 0"><u>D</u>og</div>
<div class="t" style="left:100.18px;top:635px;width:51.32px;color:#005400;transform:scaleX(0.9937);transform-origin:100% 0"><u>E</u>lephant</div>
<div class="t" style="left:104.53px;top:650px;width:46.97px;color:#005400;transform:scaleX(1.0007);transform-origin:100% 0"><u>C</u>hicken</div>
<div class="t" style="left:100.2px;top:665px;width:51.30px;color:#050570;transform:scaleX(1.0137);transform-origin:100% 0">tropicalis</div>
<div class="t" style="left:83.83px;top:665px;width:8.67px;color:#050570;transform:scaleX(1.0380);transform-origin:100% 0"><u>X</u></div>
<div class="b" style="left:93px;top:678px;width:8px;height:1px;background:#4a4a98"></div>
<div class="t" style="left:97.31px;top:680px;width:54.19px;color:#005400;transform:scaleX(0.9965);transform-origin:100% 0"><u>Z</u>ebrafish</div>
<div class="t" style="left:176.03px;top:575px;width:7.94px;color:#050570;transform:scaleX(1.0074);transform-origin:50% 0"><u>T</u></div>
<div class="t" style="left:176.03px;top:590px;width:7.94px;color:#050570;transform:scaleX(1.0074);transform-origin:50% 0"><u>T</u></div>
<div class="b" style="left:176px;top:612px;width:7px;height:1px;background:#8585b6"></div>
<div class="b" style="left:176px;top:615px;width:7px;height:1px;background:#8585b6"></div>
<div class="b" style="left:176px;top:627px;width:7px;height:1px;background:#8585b6"></div>
<div class="b" style="left:176px;top:630px;width:7px;height:1px;background:#8585b6"></div>
<div class="b" style="left:176px;top:642px;width:7px;height:1px;background:#8585b6"></div>
<div class="b" style="left:176px;top:645px;width:7px;height:1px;background:#8585b6"></div>
<div class="t" style="left:227.87px;top:575px;width:10.11px;color:#050570;transform:scaleX(0.9889);transform-origin:50% 0"><u>G</u></div>
<div class="t" style="left:227.87px;top:590px;width:10.11px;color:#050570;transform:scaleX(0.9889);transform-origin:50% 0"><u>G</u></div>
<div class="b" style="left:229px;top:612px;width:7px;height:1px;background:#8585b6"></div>
<div class="b" style="left:229px;top:615px;width:7px;height:1px;background:#8585b6"></div>
<div class="b" style="left:229px;top:627px;width:7px;height:1px;background:#8585b6"></div>
<div class="b" style="left:229px;top:630px;width:7px;height:1px;background:#8585b6"></div>
<div class="b" style="left:229px;top:642px;width:7px;height:1px;background:#8585b6"></div>
<div class="b" style="left:229px;top:645px;width:7px;height:1px;background:#8585b6"></div>
<div class="t" style="left:280.8px;top:575px;width:10.11px;color:#050570;transform:scaleX(0.9889);transform-origin:50% 0"><u>G</u></div>
<div class="t" style="left:280.8px;top:590px;width:10.11px;color:#050570;transform:scaleX(0.9889);transform-origin:50% 0"><u>G</u></div>
<div class="b" style="left:282px;top:612px;width:7px;height:1px;background:#8585b6"></div>
<div class="b" style="left:282px;top:615px;width:7px;height:1px;background:#8585b6"></div>
<div class="b" style="left:282px;top:627px;width:7px;height:1px;background:#8585b6"></div>
<div class="b" style="left:282px;top:630px;width:7px;height:1px;background:#8585b6"></div>
<div class="b" style="left:282px;top:642px;width:7px;height:1px;background:#8585b6"></div>
<div class="b" style="left:282px;top:645px;width:7px;height:1px;background:#8585b6"></div>
<div class="t" style="left:334.45px;top:575px;width:8.67px;color:#050570;transform:scaleX(1.0380);transform-origin:50% 0"><u>A</u></div>
<div class="t" style="left:334.45px;top:590px;width:8.67px;color:#050570;transform:scaleX(1.0380);transform-origin:50% 0"><u>A</u></div>
<div class="b" style="left:335px;top:612px;width:7px;height:1px;background:#8585b6"></div>
<div class="b" style="left:335px;top:615px;width:7px;height:1px;background:#8585b6"></div>
<div class="b" style="left:335px;top:627px;width:7px;height:1px;background:#8585b6"></div>
<div class="b" style="left:335px;top:630px;width:7px;height:1px;background:#8585b6"></div>
<div class="b" style="left:335px;top:642px;width:7px;height:1px;background:#8585b6"></div>
<div class="b" style="left:335px;top:645px;width:7px;height:1px;background:#8585b6"></div>
<div class="t" style="left:386.66px;top:575px;width:10.11px;color:#050570;transform:scaleX(0.9889);transform-origin:50% 0"><u>G</u></div>
<div class="t" style="left:386.66px;top:590px;width:10.11px;color:#050570;transform:scaleX(0.9889);transform-origin:50% 0"><u>G</u></div>
<div class="b" style="left:388px;top:612px;width:7px;height:1px;background:#8585b6"></div>
<div class="b" style="left:388px;top:615px;width:7px;height:1px;background:#8585b6"></div>
<div class="b" style="left:388px;top:627px;width:7px;height:1px;background:#8585b6"></div>
<div class="b" style="left:388px;top:630px;width:7px;height:1px;background:#8585b6"></div>
<div class="b" style="left:388px;top:642px;width:7px;height:1px;background:#8585b6"></div>
<div class="b" style="left:388px;top:645px;width:7px;height:1px;background:#8585b6"></div>
<div class="t" style="left:440.31px;top:575px;width:8.67px;color:#050570;transform:scaleX(1.0380);transform-origin:50% 0"><u>A</u></div>
<div class="t" style="left:440.31px;top:590px;width:8.67px;color:#050570;transform:scaleX(1.0380);transform-origin:50% 0"><u>A</u></div>
<div class="b" style="left:441px;top:612px;width:7px;height:1px;background:#8585b6"></div>
<div class="b" style="left:441px;top:615px;width:7px;height:1px;background:#8585b6"></div>
<div class="b" style="left:441px;top:627px;width:7px;height:1px;background:#8585b6"></div>
<div class="b" style="left:441px;top:630px;width:7px;height:1px;background:#8585b6"></div>
<div class="b" style="left:441px;top:642px;width:7px;height:1px;background:#8585b6"></div>
<div class="b" style="left:441px;top:645px;width:7px;height:1px;background:#8585b6"></div>
<div class="t" style="left:493.61px;top:575px;width:7.94px;color:#050570;transform:scaleX(1.0074);transform-origin:50% 0"><u>T</u></div>
<div class="t" style="left:493.61px;top:590px;width:7.94px;color:#050570;transform:scaleX(1.0074);transform-origin:50% 0"><u>T</u></div>
<div class="b" style="left:494px;top:612px;width:7px;height:1px;background:#8585b6"></div>
<div class="b" style="left:494px;top:615px;width:7px;height:1px;background:#8585b6"></div>
<div class="b" style="left:494px;top:627px;width:7px;height:1px;background:#8585b6"></div>
<div class="b" style="left:494px;top:630px;width:7px;height:1px;background:#8585b6"></div>
<div class="b" style="left:494px;top:642px;width:7px;height:1px;background:#8585b6"></div>
<div class="b" style="left:494px;top:645px;width:7px;height:1px;background:#8585b6"></div>
<div class="t" style="left:546.17px;top:575px;width:8.67px;color:#050570;transform:scaleX(1.0380);transform-origin:50% 0"><u>A</u></div>
<div class="t" style="left:546.17px;top:590px;width:8.67px;color:#050570;transform:scaleX(1.0380);transform-origin:50% 0"><u>A</u></div>
<div class="b" style="left:547px;top:612px;width:7px;height:1px;background:#8585b6"></div>
<div class="b" style="left:547px;top:615px;width:7px;height:1px;background:#8585b6"></div>
<div class="b" style="left:547px;top:627px;width:7px;height:1px;background:#8585b6"></div>
<div class="b" style="left:547px;top:630px;width:7px;height:1px;background:#8585b6"></div>
<div class="b" style="left:547px;top:642px;width:7px;height:1px;background:#8585b6"></div>
<div class="b" style="left:547px;top:645px;width:7px;height:1px;background:#8585b6"></div>
<div class="t" style="left:598.3px;top:575px;width:8.67px;color:#050570;transform:scaleX(1.0380);transform-origin:50% 0"><u>A</u></div>
<div class="t" style="left:598.3px;top:590px;width:8.67px;color:#050570;transform:scaleX(1.0380);transform-origin:50% 0"><u>A</u></div>
<div class="b" style="left:600px;top:612px;width:7px;height:1px;background:#8585b6"></div>
<div class="b" style="left:600px;top:615px;width:7px;height:1px;background:#8585b6"></div>
<div class="b" style="left:600px;top:627px;width:7px;height:1px;background:#8585b6"></div>
<div class="b" style="left:600px;top:630px;width:7px;height:1px;background:#8585b6"></div>
<div class="b" style="left:600px;top:642px;width:7px;height:1px;background:#8585b6"></div>
<div class="b" style="left:600px;top:645px;width:7px;height:1px;background:#8585b6"></div>
<div class="t" style="left:651.31px;top:575px;width:10.11px;color:#050570;transform:scaleX(0.9889);transform-origin:50% 0"><u>G</u></div>
<div class="t" style="left:652.03px;top:590px;width:8.67px;color:#7f7fb2;transform:scaleX(1.0380);transform-origin:50% 0"><u>A</u></div>
<div class="b" style="left:653px;top:612px;width:7px;height:1px;background:#8585b6"></div>
<div class="b" style="left:653px;top:615px;width:7px;height:1px;background:#8585b6"></div>
<div class="b" style="left:653px;top:627px;width:7px;height:1px;background:#8585b6"></div>
<div class="b" style="left:653px;top:630px;width:7px;height:1px;background:#8585b6"></div>
<div class="b" style="left:653px;top:642px;width:7px;height:1px;background:#8585b6"></div>
<div class="b" style="left:653px;top:645px;width:7px;height:1px;background:#8585b6"></div>
<div class="t" style="left:704.24px;top:575px;width:10.11px;color:#050570;transform:scaleX(0.9889);transform-origin:50% 0"><u>G</u></div>
<div class="t" style="left:704.24px;top:590px;width:10.11px;color:#050570;transform:scaleX(0.9889);transform-origin:50% 0"><u>G</u></div>
<div class="b" style="left:706px;top:612px;width:7px;height:1px;background:#8585b6"></div>
<div class="b" style="left:706px;top:615px;width:7px;height:1px;background:#8585b6"></div>
<div class="b" style="left:706px;top:627px;width:7px;height:1px;background:#8585b6"></div>
<div class="b" style="left:706px;top:630px;width:7px;height:1px;background:#8585b6"></div>
<div class="b" style="left:706px;top:642px;width:7px;height:1px;background:#8585b6"></div>
<div class="b" style="left:706px;top:645px;width:7px;height:1px;background:#8585b6"></div>
<div class="t" style="left:756.54px;top:575px;width:9.39px;color:#050570;transform:scaleX(0.9587);transform-origin:50% 0"><u>C</u></div>
<div class="t" style="left:756.54px;top:590px;width:9.39px;color:#050570;transform:scaleX(0.9587);transform-origin:50% 0"><u>C</u></div>
<div class="b" style="left:759px;top:612px;width:7px;height:1px;background:#8585b6"></div>
<div class="b" style="left:759px;top:615px;width:7px;height:1px;background:#8585b6"></div>
<div class="b" style="left:759px;top:627px;width:7px;height:1px;background:#8585b6"></div>
<div class="b" style="left:759px;top:630px;width:7px;height:1px;background:#8585b6"></div>
<div class="b" style="left:759px;top:642px;width:7px;height:1px;background:#8585b6"></div>
<div class="b" style="left:759px;top:645px;width:7px;height:1px;background:#8585b6"></div>
<div class="t" style="left:810.17px;top:575px;width:9.39px;color:#050570;transform:scaleX(0.9587);transform-origin:50% 0"><u>C</u></div>
<div class="t" style="left:810.17px;top:590px;width:9.39px;color:#050570;transform:scaleX(0.9587);transform-origin:50% 0"><u>C</u></div>
<div class="b" style="left:812px;top:612px;width:7px;height:1px;background:#8585b6"></div>
<div class="b" style="left:812px;top:615px;width:7px;height:1px;background:#8585b6"></div>
<div class="b" style="left:812px;top:627px;width:7px;height:1px;background:#8585b6"></div>
<div class="b" style="left:812px;top:630px;width:7px;height:1px;background:#8585b6"></div>
<div class="b" style="left:812px;top:642px;width:7px;height:1px;background:#8585b6"></div>
<div class="b" style="left:812px;top:645px;width:7px;height:1px;background:#8585b6"></div>
<div class="t" style="left:864.12px;top:575px;width:7.94px;color:#050570;transform:scaleX(1.0074);transform-origin:50% 0"><u>T</u></div>
<div class="t" style="left:864.12px;top:590px;width:7.94px;color:#050570;transform:scaleX(1.0074);transform-origin:50% 0"><u>T</u></div>
<div class="b" style="left:865px;top:612px;width:7px;height:1px;background:#8585b6"></div>
<div class="b" style="left:865px;top:615px;width:7px;height:1px;background:#8585b6"></div>
<div class="b" style="left:865px;top:627px;width:7px;height:1px;background:#8585b6"></div>
<div class="b" style="left:865px;top:630px;width:7px;height:1px;background:#8585b6"></div>
<div class="b" style="left:865px;top:642px;width:7px;height:1px;background:#8585b6"></div>
<div class="b" style="left:865px;top:645px;width:7px;height:1px;background:#8585b6"></div>
<div class="t" style="left:917.05px;top:575px;width:7.94px;color:#050570;transform:scaleX(1.0074);transform-origin:50% 0"><u>T</u></div>
<div class="t" style="left:917.05px;top:590px;width:7.94px;color:#050570;transform:scaleX(1.0074);transform-origin:50% 0"><u>T</u></div>
<div class="b" style="left:918px;top:612px;width:7px;height:1px;background:#8585b6"></div>
<div class="b" style="left:918px;top:615px;width:7px;height:1px;background:#8585b6"></div>
<div class="b" style="left:918px;top:627px;width:7px;height:1px;background:#8585b6"></div>
<div class="b" style="left:918px;top:630px;width:7px;height:1px;background:#8585b6"></div>
<div class="b" style="left:918px;top:642px;width:7px;height:1px;background:#8585b6"></div>
<div class="b" style="left:918px;top:645px;width:7px;height:1px;background:#8585b6"></div>
<div class="t" style="left:441.22px;top:696px;width:222.56px;transform:scaleX(1.0020);transform-origin:50% 0"><u>R</u>epeating <u>E</u>lements by <u>R</u>epeat<u>M</u>asker</div>
<div class="t" style="left:66.96px;top:710px;width:84.54px;transform:scaleX(0.9936);transform-origin:100% 0"><u>R</u>epeat<u>M</u>asker</div>
<div class="b" style="left:156px;top:710px;width:793px;height:15px;background:#000"></div>
</div>
</body></html>
